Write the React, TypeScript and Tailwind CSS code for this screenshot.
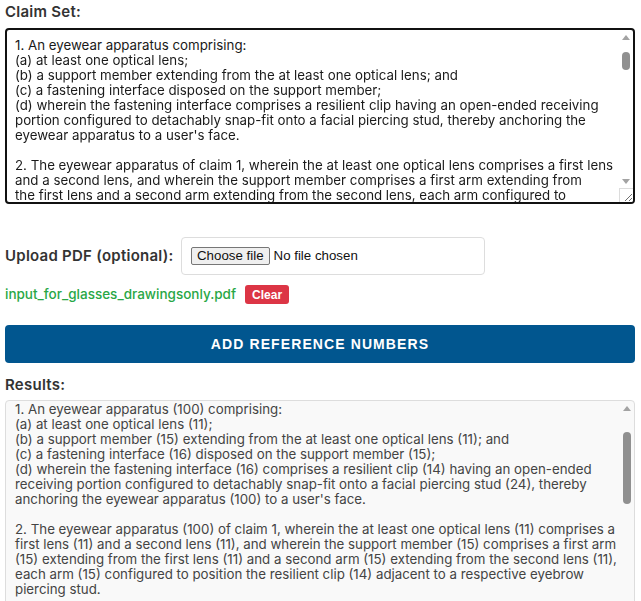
import React, { useEffect, useRef, useState } from 'react';

const CLAIMS = `1. An eyewear apparatus comprising:
(a) at least one optical lens;
(b) a support member extending from the at least one optical lens; and
(c) a fastening interface disposed on the support member;
(d) wherein the fastening interface comprises a resilient clip having an open-ended receiving
portion configured to detachably snap-fit onto a facial piercing stud, thereby anchoring the
eyewear apparatus to a user's face.

2. The eyewear apparatus of claim 1, wherein the at least one optical lens comprises a first lens
and a second lens, and wherein the support member comprises a first arm extending from
the first lens and a second arm extending from the second lens, each arm configured to
position the resilient clip adjacent to a respective eyebrow piercing stud.

3. The eyewear apparatus of claim 1, wherein the resilient clip is formed of a spring steel
or a shape-memory alloy.

4. The eyewear apparatus of claim 1, wherein the open-ended receiving portion defines a
C-shaped channel sized to receive a shaft of the facial piercing stud.

5. The eyewear apparatus of claim 1, further comprising a cushioning pad disposed on an
inner surface of the resilient clip.

6. The eyewear apparatus of claim 1, wherein the fastening interface is adjustable along a
length of the support member.

7. The eyewear apparatus of claim 1, wherein the support member is free of temple arms.

8. The eyewear apparatus of claim 2, wherein the first arm and the second arm are connected
by a bridge member.

9. The eyewear apparatus of claim 1, wherein the at least one optical lens is a corrective lens.

10. The eyewear apparatus of claim 1, wherein the at least one optical lens is a tinted lens.`;

const RESULTS = `1. An eyewear apparatus (100) comprising:
(a) at least one optical lens (11);
(b) a support member (15) extending from the at least one optical lens (11); and
(c) a fastening interface (16) disposed on the support member (15);
(d) wherein the fastening interface (16) comprises a resilient clip (14) having an open-ended
receiving portion configured to detachably snap-fit onto a facial piercing stud (24), thereby
anchoring the eyewear apparatus (100) to a user's face.

2. The eyewear apparatus (100) of claim 1, wherein the at least one optical lens (11) comprises a
first lens (11) and a second lens (11), and wherein the support member (15) comprises a first arm
(15) extending from the first lens (11) and a second arm (15) extending from the second lens (11),
each arm (15) configured to position the resilient clip (14) adjacent to a respective eyebrow
piercing stud.

3. The eyewear apparatus (100) of claim 1, wherein the resilient clip (14) is formed of a spring
steel or a shape-memory alloy.

4. The eyewear apparatus (100) of claim 1, wherein the open-ended receiving portion defines a
C-shaped channel sized to receive a shaft of the facial piercing stud (24).

5. The eyewear apparatus (100) of claim 1, further comprising a cushioning pad disposed on an
inner surface of the resilient clip (14).`;

// classic scrollbar rail: arrows, thumb and optional resize grip
function ScrollRail({ thumbTop, thumbHeight, grip }: { thumbTop: string; thumbHeight: string; grip?: boolean }) {
  return (
    <div className="w-[14px] flex flex-col shrink-0">
      <div className="h-[15px] flex items-center justify-center">
        <div className="w-0 h-0 border-x-[4px] border-x-transparent border-b-[5px] border-b-[#a3a3a3]" />
      </div>
      <div className="flex-1 flex flex-col items-center">
        <div className={`${thumbTop} ${thumbHeight} w-[8px] rounded-full bg-[#909090]`} />
      </div>
      <div className="h-[14px] flex items-center justify-center">
        <div className="w-0 h-0 border-x-[4px] border-x-transparent border-t-[5px] border-t-[#a3a3a3]" />
      </div>
      {grip && (
        <div className="h-[14px] border-l border-t border-[#dcdcdc] bg-white">
          <svg width="13" height="13" viewBox="0 0 13 13">
            <path d="M12 5 L5 12 M12 9 L9 12" stroke="#6f6f6f" strokeWidth="1" />
          </svg>
        </div>
      )}
    </div>
  );
}

export default function App() {
  const [claims, setClaims] = useState(CLAIMS);
  const [fileName, setFileName] = useState<string | null>('input_for_glasses_drawingsonly.pdf');
  const claimRef = useRef<HTMLTextAreaElement>(null);

  // caret sits after "comprising:" like an active edit
  useEffect(() => {
    const el = claimRef.current;
    if (!el) return;
    const pos = CLAIMS.indexOf('\n');
    el.focus();
    el.setSelectionRange(pos, pos);
    el.scrollTop = 0;
  }, []);

  return (
    <div className="h-[601px] overflow-hidden bg-white font-['Inter',sans-serif] text-[#333]">
      <div className="w-[630px] ml-[5px] pt-[3px] flex flex-col">
        <label className="text-[15px] leading-[18px] font-semibold tracking-[0.25px] text-[#333] mb-[7px]">Claim Set:</label>
        <div className="h-[176px] flex border-2 border-[#111] rounded-[4px] overflow-hidden bg-white">
          <textarea
            ref={claimRef}
            value={claims}
            onChange={(e) => setClaims(e.target.value)}
            className="flex-1 resize-none overflow-y-scroll [scrollbar-width:none] pl-[8px] pr-[2px] pt-[8px] text-[13.3px] leading-[15px] text-[#1a1a1a] outline-none caret-black"
          />
          <ScrollRail thumbTop="mt-[7px]" thumbHeight="h-[18px]" grip />
        </div>

        <div className="mt-[33px] flex items-center gap-[8px] h-[38px]">
          <span className="text-[15px] font-semibold tracking-[0.25px] text-[#333] w-[168px] whitespace-nowrap">Upload PDF (optional):</span>
          <label className="w-[304px] h-[38px] border border-[#ddd] rounded-[4px] px-[9px] flex items-center gap-[4px] font-['Liberation_Sans',Arial,sans-serif] text-[13.3px] text-[#111] cursor-pointer">
            <input type="file" accept="application/pdf" className="hidden" />
            <span className="h-[18px] px-[5px] flex items-center border border-[#767676] rounded-[2px] bg-[#efefef] leading-none">Choose file</span>
            <span>No file chosen</span>
          </label>
        </div>

        {fileName && (
          <div className="mt-[10px] h-[19px] flex items-center gap-[9px]">
            <span className="text-[13.5px] font-medium text-[#28a745]">{fileName}</span>
            <button
              onClick={() => setFileName(null)}
              className="h-[19px] w-[44px] rounded-[3px] bg-[#dc3545] text-white text-[12px] font-bold font-['Liberation_Sans',Arial,sans-serif]"
            >
              Clear
            </button>
          </div>
        )}

        <button className="mt-[21px] h-[38px] w-full rounded-[4px] bg-[#01568f] text-white text-[14px] font-bold tracking-[1.1px] font-['Liberation_Sans',Arial,sans-serif]">
          ADD REFERENCE NUMBERS
        </button>

        <label className="mt-[13px] text-[15px] leading-[18px] font-semibold tracking-[0.25px] text-[#333] mb-[6px]">Results:</label>
        <div className="h-[260px] flex border border-[#ddd] rounded-[4px] overflow-hidden bg-[#f9f9f9]">
          <textarea
            readOnly
            value={RESULTS}
            className="flex-1 resize-none overflow-y-scroll [scrollbar-width:none] bg-transparent pl-[9px] pr-[2px] pt-[1px] text-[13.3px] leading-[15px] text-[#444] outline-none"
          />
          <ScrollRail thumbTop="mt-[16px]" thumbHeight="h-[72px]" />
        </div>
      </div>
    </div>
  );
}
